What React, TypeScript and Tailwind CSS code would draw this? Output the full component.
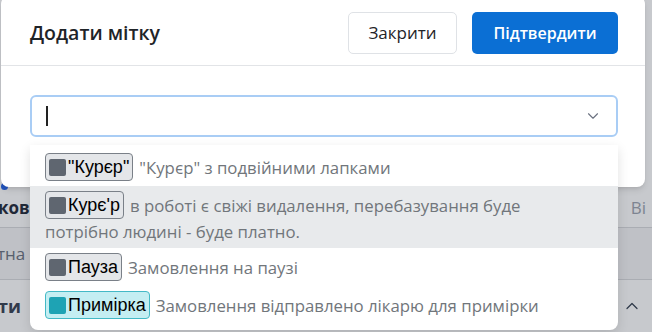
import React from "react";
import { ChevronDown, ChevronUp } from "lucide-react";

interface Tag {
    name: string;
    description: string;
    color: string;
    bg: string;
    border: string;
    highlighted?: boolean;
}

const tags: Tag[] = [
    { name: "\"Курєр\"", description: "\"Курєр\" з подвійними лапками", color: "bg-[#5f6670]", bg: "bg-[#e4e6e9]", border: "border-[#7a8088]" },
    {
        name: "Курє'р",
        description: "в роботі є свіжі видалення, перебазування буде потрібно людині - буде платно.",
        color: "bg-[#5f6670]",
        bg: "bg-[#e4e6e9]",
        border: "border-[#7a8088]",
        highlighted: true,
    },
    { name: "Пауза", description: "Замовлення на паузі", color: "bg-[#5f6670]", bg: "bg-[#e4e6e9]", border: "border-[#7a8088]" },
    { name: "Примірка", description: "Замовлення відправлено лікарю для примірки", color: "bg-[#1ea3b4]", bg: "bg-[#c4eef2]", border: "border-[#43b9c6]" },
];

const TagRow: React.FC<{ tag: Tag }> = ({ tag }) => (
    <div className={`pl-[15px] pr-[22px] py-[5px] leading-[23px] ${tag.highlighted ? "bg-[#e8eaec]" : ""}`}>
        <span
            className={`inline-flex items-center h-[28px] px-[3px] mr-[6px] rounded-[4px] border ${tag.bg} ${tag.border} align-middle text-[18px] leading-none text-black font-['Liberation_Sans',sans-serif]`}
        >
            <span className={`w-[17px] h-[17px] rounded-[2px] mr-[2px] ${tag.color}`} />
            {tag.name}
        </span>
        <span className="text-[16.8px] text-[#71767b] align-middle">{tag.description}</span>
    </div>
);

const App: React.FC = () => (
    <div className="relative w-[652px] h-[332px] overflow-hidden bg-white font-['Open_Sans',sans-serif]">
        {/* page behind the modal */}
        <div className="flex flex-col pt-[188px]">
            <div className="flex items-center justify-between h-[40px] border-b border-[#d8dadd] pr-[6px]">
                <span className="text-[17px] font-bold text-[#1f2937] -ml-[2px]">ково</span>
                <span className="text-[17px] text-[#9ca3af]">Ві</span>
            </div>
            <div className="flex items-center h-[52px] border-b border-[#d8dadd] bg-[#f4f5f6]">
                <span className="text-[17px] text-[#6b7280] -ml-[3px]">тна</span>
            </div>
            <div className="flex items-center justify-between h-[52px] pr-[10px]">
                <span className="text-[18px] font-bold text-[#374151] -ml-[2px]">ти</span>
                <ChevronUp size={20} strokeWidth={1.5} className="text-[#374151]" />
            </div>
        </div>
        <div className="absolute left-[1px] top-[183px] w-[7px] h-[7px] rounded-full bg-[#2563eb]" />

        {/* overlay */}
        <div className="absolute inset-0 bg-[#1f2937]/25" />

        {/* modal */}
        <div className="absolute left-[1px] -top-[4px] w-[644px] h-[191px] bg-white rounded-[8px] shadow-md">
            <div className="flex items-center justify-between h-[70px] pt-[4px] pl-[29px] pr-[27px] border-b border-[#e2e4e7]">
                <h2 className="text-[19.5px] font-semibold text-[#1f2428]">Додати мітку</h2>
                <div className="flex gap-[15px]">
                    <button className="h-[42px] w-[109px] rounded-[5px] border border-[#dfe2e6] bg-white text-[17px] text-[#1f2428]">
                        Закрити
                    </button>
                    <button className="h-[42px] w-[146px] rounded-[5px] bg-[#0b6fd4] text-[16px] font-semibold text-white">
                        Підтвердити
                    </button>
                </div>
            </div>
            <div className="pl-[29px] pr-[27px] pt-[29px]">
                <div className="flex items-center justify-between h-[42px] rounded-[6px] border-2 border-[#a9cdf5] bg-white pl-[14px] pr-[14px]">
                    <span className="w-[1.5px] h-[20px] bg-[#222]" />
                    <ChevronDown size={18} strokeWidth={1.5} className="text-[#6b7280]" />
                </div>
            </div>
        </div>

        {/* dropdown */}
        <div className="absolute left-[30px] top-[145px] w-[588px] bg-white rounded-b-[8px] shadow-[0_4px_12px_rgba(0,0,0,0.12)] pt-[3px] pb-[6px]">
            {tags.map((tag) => (
                <TagRow key={tag.name} tag={tag} />
            ))}
        </div>
    </div>
);

export default App;
